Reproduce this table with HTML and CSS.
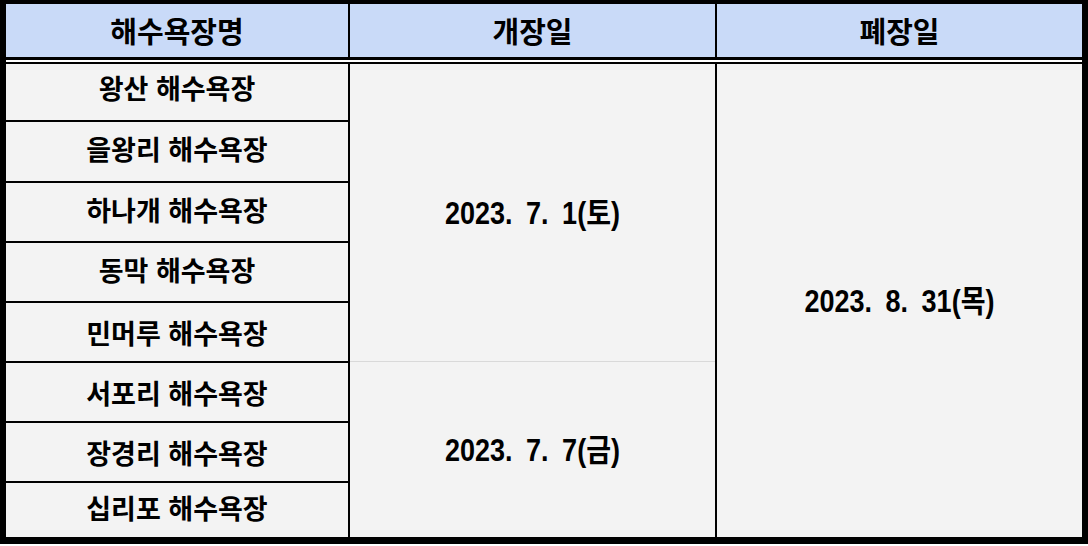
FILE: index.html
```html
<!DOCTYPE html>
<html lang="ko">
<head>
<meta charset="utf-8">
<link rel="stylesheet" href="styles.css">
</head>
<body>
<div class="sheet">
  <div class="head">
    <div class="hcell">해수욕장명</div>
    <div class="hcell">개장일</div>
    <div class="hcell">폐장일</div>
  </div>
  <div class="sep"></div>
  <div class="body">
    <div class="names">
      <div class="name first">왕산 해수욕장</div>
      <div class="name">을왕리 해수욕장</div>
      <div class="name">하나개 해수욕장</div>
      <div class="name">동막 해수욕장</div>
      <div class="name low">민머루 해수욕장</div>
      <div class="name low">서포리 해수욕장</div>
      <div class="name low">장경리 해수욕장</div>
      <div class="name">십리포 해수욕장</div>
    </div>
    <div class="open">
      <div class="date"><span class="dt">2023. 7. 1(토)</span></div>
      <div class="date"><span class="dt">2023. 7. 7(금)</span></div>
    </div>
    <div class="close">
      <div class="date"><span class="dt">2023. 8. 31(목)</span></div>
    </div>
  </div>
</div>
</body>
</html>
```
FILE: styles.css
```css
html, body {
  margin: 0;
  background: #ffffff;
}
body {
  font-family: "Liberation Sans", "Noto Sans CJK KR", sans-serif;
  font-weight: bold;
  color: #000;
}
.sheet {
  width: 1088px;
  box-sizing: border-box;
  border-style: solid;
  border-color: #000;
  border-width: 4px 6px 7px 6px;
}
.head {
  display: grid;
  grid-template-columns: 342px 365px 365px;
  column-gap: 2px;
  height: 53px;
  background: #000;
}
.hcell {
  background: #c9daf8;
  display: flex;
  align-items: center;
  justify-content: center;
  font-family: "Noto Sans CJK KR", sans-serif;
  font-size: 29px;
  padding-bottom: 2px;
}
.sep {
  height: 2px;
  background: #fff;
  border-top: 3px solid #000;
  border-bottom: 2px solid #000;
}
.body {
  display: grid;
  grid-template-columns: 342px 365px 365px;
  column-gap: 2px;
  height: 473px;
  background: #000;
}
.names {
  display: grid;
  grid-template-rows: 56px 59px 58px 58px 58px 58px 58px 1fr;
  row-gap: 2px;
  background: #000;
}
.name {
  background: #f3f3f3;
  display: flex;
  align-items: center;
  justify-content: center;
  font-family: "Noto Sans CJK KR", sans-serif;
  font-size: 27px;
  padding-bottom: 6px;
}
.name.first {
  padding-bottom: 10px;
}
.name.low {
  padding-bottom: 0;
}
.open {
  display: grid;
  grid-template-rows: 297px 1fr;
  row-gap: 1px;
  background: #d9d9d9;
}
.close {
  display: grid;
  background: #f3f3f3;
}
.date {
  background: #f3f3f3;
  display: flex;
  align-items: center;
  justify-content: center;
  font-size: 27px;
  padding-bottom: 4px;
}
.dt {
  display: inline-block;
  word-spacing: 6px;
  transform: scaleY(1.14);
}
```
